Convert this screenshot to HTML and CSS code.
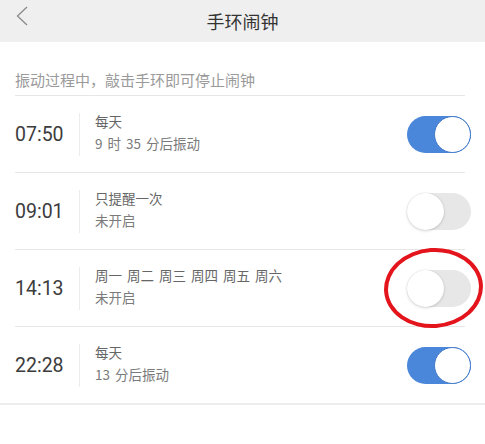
FILE: index.html
```html
<!DOCTYPE html>
<html lang="zh">
<head>
<meta charset="utf-8">
<link rel="stylesheet" href="styles.css">
</head>
<body>
<div class="page">
  <header class="nav">
    <svg class="back" width="14" height="22" viewBox="0 0 14 22"><path d="M12 2 L2.5 11 L12 20" fill="none" stroke="#8a8a8a" stroke-width="1.3"/></svg>
    <div class="title">手环闹钟</div>
  </header>
  <div class="hint">振动过程中，敲击手环即可停止闹钟</div>
  <div class="divider"></div>

  <div class="row">
    <div class="time">07:50</div>
    <div class="vline"></div>
    <div class="info"><div class="l1">每天</div><div class="l2">9 时 35 分后振动</div></div>
    <div class="toggle on"><span class="knob"></span></div>
  </div>
  <div class="divider"></div>

  <div class="row">
    <div class="time">09:01</div>
    <div class="vline"></div>
    <div class="info"><div class="l1">只提醒一次</div><div class="l2">未开启</div></div>
    <div class="toggle"><span class="knob"></span></div>
  </div>
  <div class="divider"></div>

  <div class="row">
    <div class="time">14:13</div>
    <div class="vline"></div>
    <div class="info"><div class="l1">周一 周二 周三 周四 周五 周六</div><div class="l2">未开启</div></div>
    <div class="toggle"><span class="knob"></span><span class="circle"></span></div>
  </div>
  <div class="divider"></div>

  <div class="row">
    <div class="time">22:28</div>
    <div class="vline"></div>
    <div class="info"><div class="l1">每天</div><div class="l2">13 分后振动</div></div>
    <div class="toggle on"><span class="knob"></span></div>
  </div>
  <div class="divider full"></div>
</div>
</body>
</html>
```

FILE: styles.css
```css
* { box-sizing: border-box; }
body {
  margin: 0;
  background: #fff;
  font-family: "Noto Sans", "Noto Sans CJK SC", sans-serif;
  color: #333;
}
.page { width: 485px; }
.nav {
  height: 42px;
  background: #efefef;
  display: flex;
  align-items: center;
  justify-content: center;
  position: relative;
}
.back { position: absolute; left: 15px; top: 5px; }
.title {
  font-size: 18px;
  color: #333;
  font-family: "Noto Sans CJK SC", sans-serif;
  margin-top: -1px;
}
.hint {
  height: 53px;
  padding: 27px 0 0 15px;
  font-size: 15px;
  color: #9a9a9a;
  font-family: "Noto Sans CJK SC", sans-serif;
  line-height: 22px;
}
.divider {
  height: 1px;
  background: #e6e6e6;
  margin: 0 20px 0 15px;
}
.divider.full { margin: 0; height: 2px; background: #ececec; }
.row {
  height: 76px;
  display: flex;
  align-items: center;
  padding: 0 14px 0 15px;
}
.time {
  width: 64px;
  font-family: "Roboto", sans-serif;
  font-weight: 400;
  font-size: 19.5px;
  color: #3c3c3c;
}
.vline {
  width: 1px;
  height: 43px;
  background: #ececec;
}
.info {
  flex: 1;
  padding-left: 15px;
  padding-bottom: 4px;
  font-family: "Noto Sans CJK SC", sans-serif;
  font-size: 13.5px;
  line-height: 18px;
  word-spacing: 2px;
}
.l1 { color: #666; margin-bottom: 4px; }
.l2 { color: #7a7a7a; }
.toggle {
  width: 64px;
  height: 37px;
  border-radius: 19px;
  background: #e7e7e7;
  position: relative;
  display: flex;
  align-items: center;
}
.knob {
  width: 37px;
  height: 37px;
  border-radius: 50%;
  background: #fff;
  box-shadow: 0 1px 3px rgba(0,0,0,0.16), 0 0 0 0.5px rgba(0,0,0,0.05);
}
.toggle.on {
  background: #4a86d9;
  justify-content: flex-end;
}
.toggle.on .knob {
  border: 1.5px solid #3f78c9;
  box-shadow: none;
}
.circle {
  position: absolute;
  left: -23px;
  top: -22px;
  width: 99px;
  height: 80px;
  border: 4px solid #e3141b;
  border-radius: 50%;
  transform: rotate(-4deg);
}
```
